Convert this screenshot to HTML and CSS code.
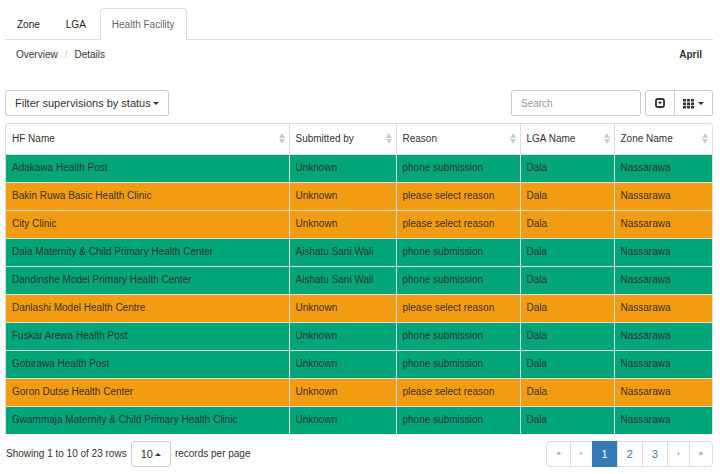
FILE: index.html
```html
<!DOCTYPE html>
<html lang="en">
<head>
<meta charset="utf-8">
<title>Health Facility</title>
<link rel="stylesheet" href="styles.css">
</head>
<body>
<nav class="tabs">
  <a class="tab" href="#zone">Zone</a>
  <a class="tab" href="#lga">LGA</a>
  <a class="tab active" href="#facility" aria-current="page">Health Facility</a>
</nav>
<div class="subbar">
  <nav class="crumbs"><a href="#overview">Overview</a><span class="slash">/</span><a href="#details">Details</a></nav>
  <strong>April</strong>
</div>
<div class="toolbar">
  <button class="btn" type="button">Filter supervisions by status <span class="caret"></span></button>
  <div class="tools">
    <input class="search" type="search" placeholder="Search" aria-label="Search">
    <div class="group">
      <button class="btn toggle" type="button" aria-label="Toggle view">
        <svg width="10" height="10" viewBox="0 0 10 10"><rect x="1" y="1" width="8" height="8" rx="1.5" fill="none" stroke="#333" stroke-width="1.8"/><path d="M2.8 3.8h4.4L5 6.6z" fill="#333"/></svg>
      </button>
      <button class="btn columns" type="button" aria-label="Columns">
        <svg width="11" height="11" viewBox="0 0 11 11" fill="#333"><path d="M0 1h3v2.6H0zM4 1h3v2.6H4zM8 1h3v2.6H8zM0 4.4h3V7H0zM4 4.4h3V7H4zM8 4.4h3V7H8zM0 7.8h3v2.6H0zM4 7.8h3v2.6H4zM8 7.8h3v2.6H8z"/></svg>
        <span class="caret"></span>
      </button>
    </div>
  </div>
</div>
<div class="table-box">
<table>
  <colgroup><col><col class="c-by"><col class="c-reason"><col class="c-lga"><col class="c-zone"></colgroup>
  <thead>
    <tr>
      <th><button class="sort" type="button">HF Name<span class="arrows"></span></button></th>
      <th><button class="sort" type="button">Submitted by<span class="arrows"></span></button></th>
      <th><button class="sort" type="button">Reason<span class="arrows"></span></button></th>
      <th><button class="sort" type="button">LGA Name<span class="arrows"></span></button></th>
      <th><button class="sort" type="button">Zone Name<span class="arrows"></span></button></th>
    </tr>
  </thead>
  <tbody>
    <tr class="ok"><td>Adakawa Health Post</td><td>Unknown</td><td>phone submission</td><td>Dala</td><td>Nassarawa</td></tr>
    <tr class="warn"><td>Bakin Ruwa Basic Health Clinic</td><td>Unknown</td><td>please select reason</td><td>Dala</td><td>Nassarawa</td></tr>
    <tr class="warn"><td>City Clinic</td><td>Unknown</td><td>please select reason</td><td>Dala</td><td>Nassarawa</td></tr>
    <tr class="ok"><td>Dala Maternity &amp; Child Primary Health Center</td><td>Aishatu Sani Wali</td><td>phone submission</td><td>Dala</td><td>Nassarawa</td></tr>
    <tr class="ok"><td>Dandinshe Model Primary Health Center</td><td>Aishatu Sani Wali</td><td>phone submission</td><td>Dala</td><td>Nassarawa</td></tr>
    <tr class="warn"><td>Danlashi Model Health Centre</td><td>Unknown</td><td>please select reason</td><td>Dala</td><td>Nassarawa</td></tr>
    <tr class="ok"><td>Fuskar Arewa Health Post</td><td>Unknown</td><td>phone submission</td><td>Dala</td><td>Nassarawa</td></tr>
    <tr class="ok"><td>Gobirawa Health Post</td><td>Unknown</td><td>phone submission</td><td>Dala</td><td>Nassarawa</td></tr>
    <tr class="warn"><td>Goron Dutse Health Center</td><td>Unknown</td><td>please select reason</td><td>Dala</td><td>Nassarawa</td></tr>
    <tr class="ok"><td>Gwammaja Maternity &amp; Child Primary Health Clinic</td><td>Unknown</td><td>phone submission</td><td>Dala</td><td>Nassarawa</td></tr>
  </tbody>
</table>
</div>
<div class="footer">
  <div class="summary">Showing 1 to 10 of 23 rows
    <button class="btn" type="button" aria-label="Records per page">10 <span class="caret up"></span></button>
    records per page</div>
  <nav class="pages" aria-label="Pagination">
    <a class="arrow muted" href="#first">«</a><a class="arrow muted" href="#previous">‹</a><a class="current" href="#1" aria-current="page">1</a><a href="#2">2</a><a href="#3">3</a><a class="arrow" href="#next">›</a><a class="arrow" href="#last">»</a>
  </nav>
</div>
</body>
</html>
```
FILE: styles.css
```css
* { box-sizing: border-box; }

body {
  margin: 0;
  padding: 8px 7px 0 5px;
  background: #fff;
  color: #333;
  font: 10px/16px "Liberation Sans", Arial, sans-serif;
}

a { color: inherit; text-decoration: none; }
button, input { font: inherit; color: inherit; }

.tabs { display: flex; gap: 2px; border-bottom: 1px solid #ddd; }
.tab {
  padding: 8px 11px 6px;
  border: 1px solid transparent;
  border-bottom: 0;
  border-radius: 4px 4px 0 0;
  color: #222;
}
.tab.active { margin-bottom: -1px; padding-bottom: 7px; border-color: #ddd; background: #fff; color: #666; }

.subbar { display: flex; justify-content: space-between; padding: 7px 11px 5px; }
.slash { padding: 0 7px; color: #ccc; }

.toolbar { display: flex; justify-content: space-between; align-items: center; margin-top: 22px; }
.tools { display: flex; gap: 4px; }
.btn {
  display: inline-flex;
  align-items: center;
  justify-content: center;
  gap: 2px;
  height: 26px;
  padding: 0 9px;
  border: 1px solid #ccc;
  border-radius: 3px;
  background: #fff;
  font-size: 11px;
}
.search {
  width: 130px;
  height: 26px;
  padding: 0 9px;
  border: 1px solid #ccc;
  border-radius: 3px;
  background: #fff;
}
.search::placeholder { color: #999; opacity: 1; }
.group { display: flex; }
.toggle { width: 30px; border-radius: 3px 0 0 3px; }
.columns { width: 39px; margin-left: -1px; gap: 4px; border-radius: 0 3px 3px 0; }
.btn svg { flex: none; }

.caret { border: 3px solid transparent; border-top-color: currentColor; border-bottom: 0; }
.caret.up { border-top: 0; border-bottom: 3px solid currentColor; }

.table-box { margin-top: 7px; border: 1px solid #ddd; border-bottom: 0; border-radius: 4px 4px 0 0; }
table { width: 100%; border-collapse: collapse; table-layout: fixed; }
.c-by { width: 107px; }
.c-reason { width: 124px; }
.c-lga { width: 94px; }
.c-zone { width: 98px; }
th, td { padding: 0 6px; border-left: 1px solid #ddd; text-align: left; white-space: nowrap; font-weight: normal; }
th:first-child, td:first-child { border-left: 0; }
th { height: 30px; padding-right: 4px; }
td { height: 28px; border-top: 1px solid #ddd; }
.ok { background: #00a678; }
.warn { background: #f39c12; }

.sort {
  display: flex;
  align-items: center;
  justify-content: space-between;
  width: 100%;
  padding: 0;
  border: 0;
  background: none;
}
.arrows { display: grid; gap: 1px; }
.arrows::before, .arrows::after { content: ""; border: 3px solid transparent; }
.arrows::before { border-top: 0; border-bottom: 5px solid #ccc; }
.arrows::after { border-bottom: 0; border-top: 5px solid #ccc; }

.footer { display: flex; justify-content: space-between; align-items: center; margin-top: 7px; }
.summary { display: flex; align-items: center; gap: 4px; padding-left: 1px; }
.pages { display: flex; border: 1px solid #ddd; border-radius: 4px; color: #337ab7; font-size: 11px; }
.pages a { padding: 4px 9px; border-left: 1px solid #ddd; }
.pages a:first-child { border-left: 0; }
.pages .arrow { padding: 4px 9px; font-size: 8px; }
.pages .muted { color: #777; }
.pages .current { margin: -1px 0; padding: 5px 9px; border-color: #337ab7; background: #337ab7; color: #fff; }
```
